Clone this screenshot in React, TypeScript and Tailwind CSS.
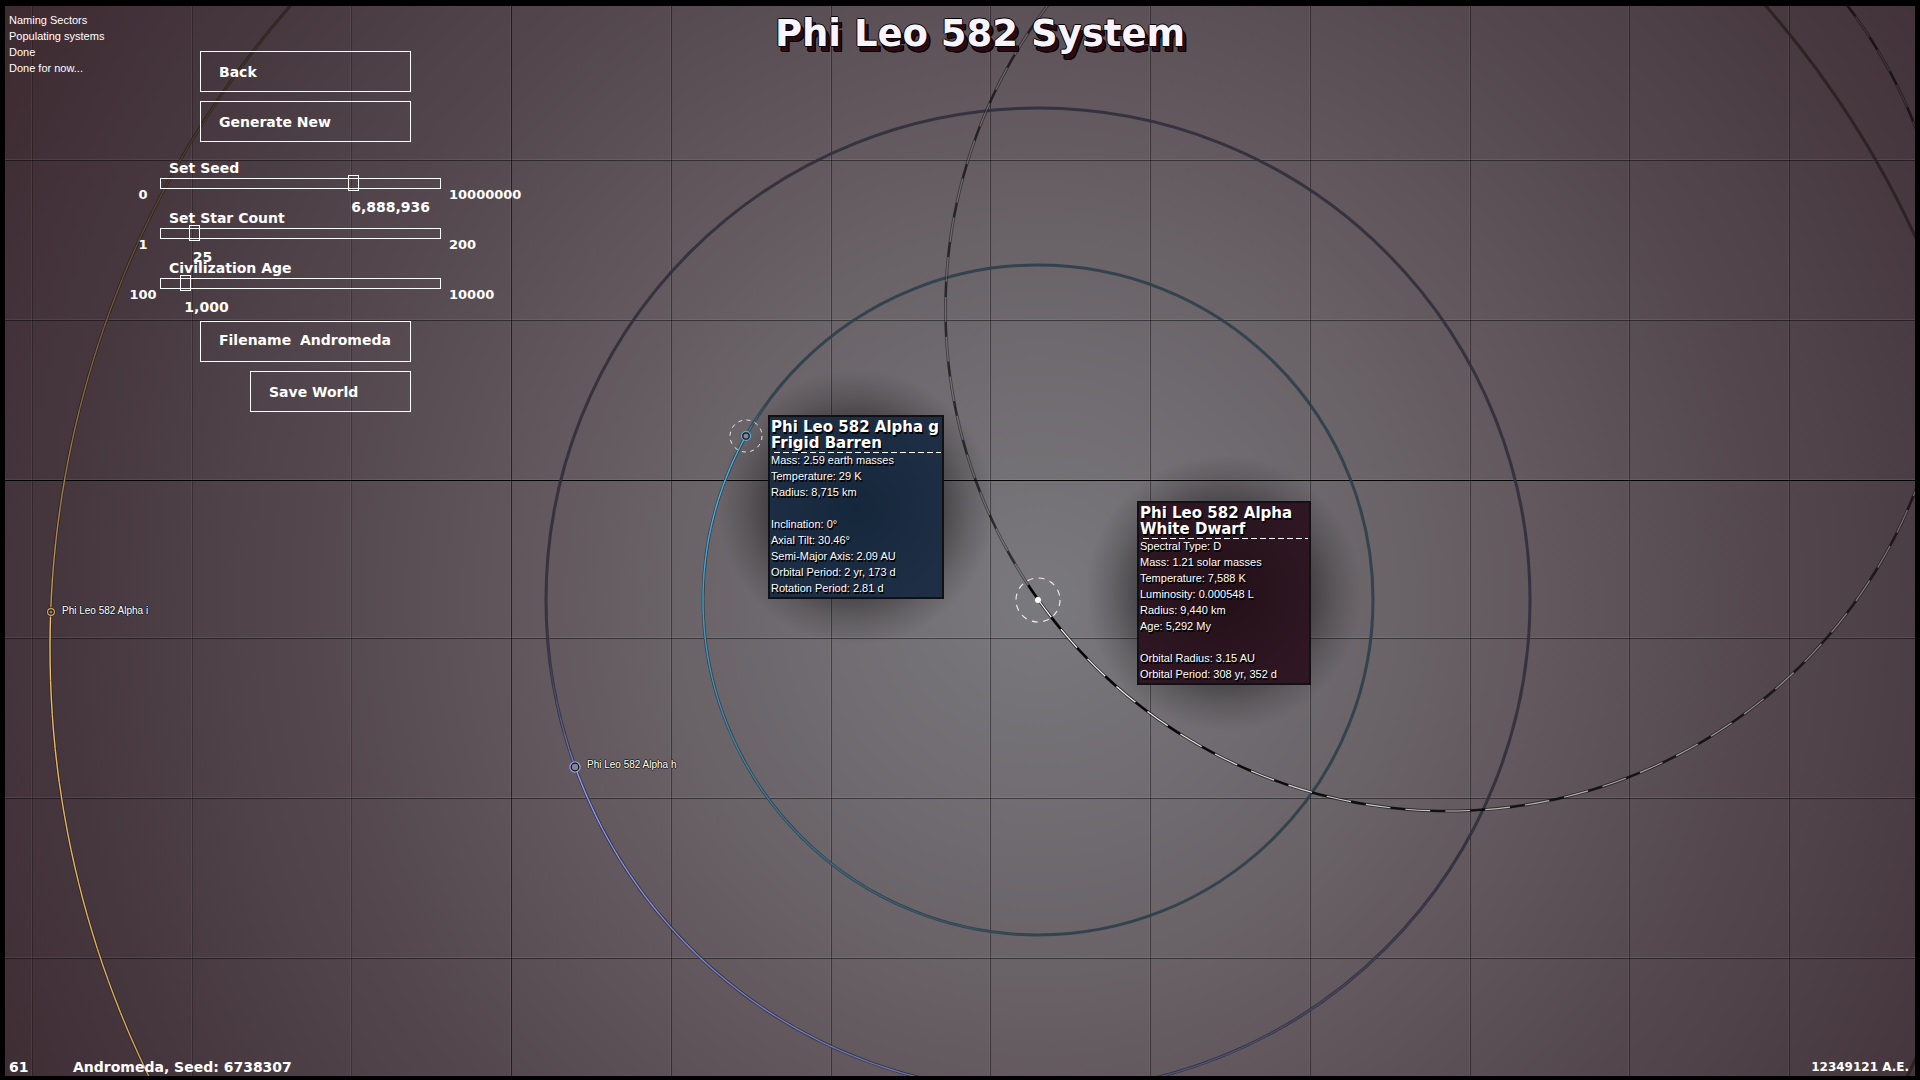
import { useState } from "react";

interface Orbit {
  cx: number;
  cy: number;
  r: number;
  x: number;
  y: number;
  glow: string;
  base: string;
  reach: number;
  lead: number;
}

const ORBITS: Orbit[] = [
  { cx: 1028, cy: 648, r: 978, x: 51, y: 612, glow: "#f4c068", base: "#2a211f", reach: 0.42, lead: 0.15 },
  { cx: 1038, cy: 600, r: 492, x: 575, y: 767, glow: "#8f9cf8", base: "#312f3c", reach: 0.36, lead: 0.06 },
  { cx: 1038, cy: 600, r: 335, x: 746, y: 436, glow: "#4cb8f0", base: "#2e3f4a", reach: 0.34, lead: 0.03 },
];

function arc(cx: number, cy: number, r: number, from: number, to: number) {
  const p = (a: number) => `${(cx + r * Math.cos(a)).toFixed(2)} ${(cy + r * Math.sin(a)).toFixed(2)}`;
  return `M${p(from)}A${r} ${r} 0 0 ${to > from ? 1 : 0} ${p(to)}`;
}

function PlanetOrbit({ o }: { o: Orbit }) {
  const start = Math.atan2(o.y - o.cy, o.x - o.cx);
  const n = 180;
  const step = (Math.PI * 2) / n;
  const parts = [];
  for (let i = 0; i < n; i++) {
    const t = i / n;
    const ahead = Math.max(0, 1 - t / o.reach);
    const behind = Math.max(0, 1 - (1 - t) / o.lead);
    const alpha = Math.max(ahead, behind * behind * 0.8);
    if (alpha > 0.01) {
      const from = start - i * step;
      parts.push(
        <path key={i} d={arc(o.cx, o.cy, o.r, from, from - step)} stroke={o.glow} strokeOpacity={alpha} strokeWidth={1.4} />
      );
    }
  }
  return (
    <g fill="none">
      <circle cx={o.cx} cy={o.cy} r={o.r} stroke={o.base} strokeOpacity={0.9} strokeWidth={3} />
      {parts}
    </g>
  );
}

function StarOrbit() {
  const cx = 1447.5;
  const cy = 309;
  const r = 502;
  const start = Math.atan2(600 - cy, 1038 - cx);
  const n = 79;
  const step = (Math.PI * 2) / n;
  return (
    <g fill="none">
      {Array.from({ length: n }, (_, i) => {
        const t = i / n;
        const from = start + step * 0.45 - i * step;
        const mid = from - step * 0.38;
        const dark = Math.max(0.62, 1 - t * 1.2);
        const light = i === 0 ? 1 : t > 0.7 ? 0.26 : Math.max(0.1, 1 - t * 2);
        return (
          <g key={i}>
            <path d={arc(cx, cy, r, from, mid)} stroke="#000" strokeOpacity={dark} strokeWidth={2.6} />
            <path d={arc(cx, cy, r, mid, from - step)} stroke="#000" strokeOpacity={dark * 0.65} strokeWidth={3} />
            <path d={arc(cx, cy, r, mid, from - step)} stroke="#fff" strokeOpacity={light} strokeWidth={1.2} />
          </g>
        );
      })}
    </g>
  );
}

const COLS = [32, 192, 351, 511, 671, 831, 990, 1150, 1310, 1470, 1629, 1789];
const ROWS = [160, 320, 480, 638, 798, 958];

function SystemMap() {
  return (
    <svg
      className="absolute inset-0 h-full w-full"
      viewBox="5 6 1910 1070"
      preserveAspectRatio="xMidYMid slice"
      aria-hidden="true"
    >
      <defs>
        <radialGradient id="space" gradientUnits="userSpaceOnUse" cx="1038" cy="600" r="1190">
          <stop offset="0" stopColor="#7a797d" />
          <stop offset="0.28" stopColor="#6b656a" />
          <stop offset="0.42" stopColor="#62585d" />
          <stop offset="0.62" stopColor="#53474d" />
          <stop offset="0.82" stopColor="#46373e" />
          <stop offset="1" stopColor="#3e2a31" />
        </radialGradient>
        <radialGradient id="shade">
          <stop offset="0" stopColor="#000" stopOpacity="0.65" />
          <stop offset="0.6" stopColor="#000" stopOpacity="0.4" />
          <stop offset="0.82" stopColor="#000" stopOpacity="0.15" />
          <stop offset="1" stopColor="#000" stopOpacity="0" />
        </radialGradient>
      </defs>
      <rect x="0" y="0" width="1920" height="1080" fill="url(#space)" />
      <g shapeRendering="crispEdges">
        {COLS.map((x) => (
          <g key={x}>
            <rect x={x - 1} y="0" width="1" height="1080" fill="#fff" fillOpacity="0.06" />
            <rect x={x} y="0" width="1" height="1080" fill="#000" fillOpacity={x === 511 ? 0.6 : x < 400 ? 0.25 : 0.42} />
          </g>
        ))}
        {ROWS.map((y) => (
          <g key={y}>
            <rect x="0" y={y - 1} width="1920" height="1" fill="#fff" fillOpacity="0.08" />
            <rect x="0" y={y} width="1920" height="1" fill="#000" fillOpacity={y === 480 ? 0.95 : 0.45} />
          </g>
        ))}
      </g>
      {ORBITS.map((o) => (
        <PlanetOrbit key={o.r} o={o} />
      ))}
      <StarOrbit />
      <circle cx="856" cy="507" r="138" fill="url(#shade)" />
      <circle cx="1224" cy="593" r="138" fill="url(#shade)" />

      <g fill="#84848a">
        <circle cx="51" cy="612" r="4.6" fill="#17120f" />
        <circle cx="51" cy="612" r="3.4" fill="none" stroke="#e0ac68" strokeWidth="1.2" />
        <circle cx="51" cy="612" r="1.6" />
        <circle cx="575" cy="767" r="5" stroke="#8f9cf8" strokeWidth="1.4" />
        <circle cx="575" cy="767" r="3.8" stroke="#111" strokeWidth="1.2" />
        <circle cx="746" cy="436" r="4.4" stroke="#4cb4ea" strokeWidth="1.4" />
        <circle cx="746" cy="436" r="3.2" stroke="#111" strokeWidth="1.2" />
        <circle cx="1038" cy="600" r="3" fill="#fff" />
      </g>
      <g fill="none" stroke="#fff" strokeOpacity="0.85">
        <circle cx="746" cy="436" r="16" strokeWidth="1" strokeDasharray="4 4.38" />
        <circle cx="1038" cy="600" r="22" strokeWidth="1.2" strokeDasharray="6 5.52" />
      </g>
    </svg>
  );
}

interface SliderProps {
  id: string;
  label: string;
  min: number;
  max: number;
  initial: number;
}

function Slider({ id, label, min, max, initial }: SliderProps) {
  const [value, setValue] = useState(initial);
  const share = ((value - min) / (max - min)) * 100;
  return (
    <div className="h-[50px]">
      <label htmlFor={id} className="ml-[43px] block h-[18px] leading-4">
        {label}
      </label>
      <div className="flex h-[11px] items-start">
        <span className="mt-[9px] w-[34px] text-center text-[13px] leading-4">{min}</span>
        <div className="relative h-[11px] w-[281px] border border-white">
          <input
            id={id}
            type="range"
            min={min}
            max={max}
            value={value}
            onChange={(e) => setValue(Number(e.target.value))}
            className="absolute -top-1 -left-1.5 h-4 w-[291px] appearance-none bg-transparent [&::-webkit-slider-runnable-track]:h-4 [&::-webkit-slider-thumb]:h-4 [&::-webkit-slider-thumb]:w-[11px] [&::-webkit-slider-thumb]:appearance-none [&::-webkit-slider-thumb]:border [&::-webkit-slider-thumb]:border-white [&::-webkit-slider-thumb]:bg-transparent"
          />
          <output htmlFor={id} className="absolute top-5 -ml-0.5 leading-4" style={{ left: `${share}%` }}>
            {value.toLocaleString("en-US")}
          </output>
        </div>
        <span className="mt-[9px] ml-2 text-[13px] leading-4">{max}</span>
      </div>
    </div>
  );
}

function Controls() {
  return (
    <form className="flex flex-col items-start text-[14px] font-bold" onSubmit={(e) => e.preventDefault()}>
      <button type="button" className="ml-[74px] h-[41px] w-[211px] border border-white pt-0.5 pl-[18px] text-left">
        Back
      </button>
      <button
        type="button"
        className="mt-[9px] ml-[74px] h-[41px] w-[211px] border border-white pt-0.5 pl-[18px] text-left"
      >
        Generate New
      </button>
      <div className="mt-[18px]">
        <Slider id="seed" label="Set Seed" min={0} max={10000000} initial={6888936} />
        <Slider id="stars" label="Set Star Count" min={1} max={200} initial={25} />
        <Slider id="age" label="Civilization Age" min={100} max={10000} initial={1000} />
      </div>
      <div className="mt-[11px] ml-[74px] flex h-[41px] w-[211px] items-center border border-white pb-0.5 pl-[18px]">
        <label htmlFor="filename" className="w-[81px]">
          Filename
        </label>
        <input id="filename" defaultValue="Andromeda" className="w-[100px] bg-transparent outline-none" />
      </div>
      <button
        type="submit"
        className="mt-[9px] ml-[124px] h-[41px] w-[161px] border border-white pt-0.5 pl-[18px] text-left"
      >
        Save World
      </button>
    </form>
  );
}

interface InfoProps {
  name: string;
  kind: string;
  groups: string[][];
  className: string;
}

function InfoPanel({ name, kind, groups, className }: InfoProps) {
  return (
    <section
      className={
        "absolute border-2 border-[#111113] px-px py-[2px] whitespace-nowrap [text-shadow:1px_1px_0_#000,1px_2px_0_#000] " +
        className
      }
    >
      <h2 className="text-[15px] leading-4 font-bold">{name}</h2>
      <h2 className="text-[15px] leading-4 font-bold">{kind}</h2>
      <div className="ml-[3px] h-px translate-y-px bg-[repeating-linear-gradient(to_right,#fff_0_6px,transparent_6px_9px)]" />
      {groups.map((lines, i) => (
        <ul key={i} className={"font-['Liberation_Sans',sans-serif] text-[11px] leading-4 " + (i ? "mt-4" : "")}>
          {lines.map((line) => (
            <li key={line}>{line}</li>
          ))}
        </ul>
      ))}
    </section>
  );
}

const LOG = ["Naming Sectors", "Populating systems", "Done", "Done for now..."];

export default function App() {
  return (
    <div className="flex min-h-screen flex-col border-t-[6px] border-r-[5px] border-b-[4px] border-l-[5px] border-black bg-[#5b4f55] font-['DejaVu_Sans',sans-serif] text-white">
      <main className="relative grid flex-1 grid-rows-[1fr_auto] overflow-hidden">
        <SystemMap />

        <h1 className="relative col-start-1 row-start-1 self-start pt-[4px] pl-[40px] text-center text-[37px] leading-[48px] font-bold text-[#f8f4ff] [text-shadow:1px_0_0_#000,-1px_0_0_#000,0_1px_0_#000,0_-1px_0_#000,3px_5px_0_#2a0a14,4px_5px_0_#000,2px_5px_0_#000,3px_6px_0_#000,4px_6px_0_#000]">
          Phi Leo 582 System
        </h1>

        <div className="relative col-start-1 row-start-1 flex items-start self-start justify-self-start">
          <ul className="w-[117px] pt-1.5 pl-1 font-['Liberation_Sans',sans-serif] text-[11px] leading-4 whitespace-nowrap">
            {LOG.map((line) => (
              <li key={line}>{line}</li>
            ))}
          </ul>
          <div className="mt-[45px] ml-1">
            <Controls />
          </div>
        </div>

        <p className="absolute top-[597px] left-[57px] font-['Liberation_Sans',sans-serif] text-[10px] leading-4 [text-shadow:1px_0_0_#222,-1px_0_0_#222,0_1px_0_#222,0_-1px_0_#222]">
          Phi Leo 582 Alpha i
        </p>
        <p className="absolute top-[751px] left-[582px] font-['Liberation_Sans',sans-serif] text-[10px] leading-4 [text-shadow:1px_0_0_#222,-1px_0_0_#222,0_1px_0_#222,0_-1px_0_#222]">
          Phi Leo 582 Alpha h
        </p>

        <InfoPanel
          name="Phi Leo 582 Alpha g"
          kind="Frigid Barren"
          className="top-[409px] left-[763px] h-[184px] w-[176px] bg-[radial-gradient(circle,#15273b_0,#1e2f45_100px)]"
          groups={[
            ["Mass: 2.59 earth masses", "Temperature: 29 K", "Radius: 8,715 km"],
            [
              "Inclination: 0°",
              "Axial Tilt: 30.46°",
              "Semi-Major Axis: 2.09 AU",
              "Orbital Period: 2 yr, 173 d",
              "Rotation Period: 2.81 d",
            ],
          ]}
        />
        <InfoPanel
          name="Phi Leo 582 Alpha"
          kind="White Dwarf"
          className="top-[495px] left-[1132px] h-[184px] w-[174px] bg-[radial-gradient(circle,#241019_0,#2e1722_100px)]"
          groups={[
            [
              "Spectral Type: D",
              "Mass: 1.21 solar masses",
              "Temperature: 7,588 K",
              "Luminosity: 0.000548 L",
              "Radius: 9,440 km",
              "Age: 5,292 My",
            ],
            ["Orbital Radius: 3.15 AU", "Orbital Period: 308 yr, 352 d"],
          ]}
        />

        <footer className="relative row-start-2 flex items-center pr-1.5 pb-px pl-1 text-[14px] leading-4 font-bold">
          <span className="w-16">61</span>
          <span className="flex-1">Andromeda, Seed: 6738307</span>
          <span className="text-[12px]">12349121 A.E.</span>
        </footer>
      </main>
    </div>
  );
}
